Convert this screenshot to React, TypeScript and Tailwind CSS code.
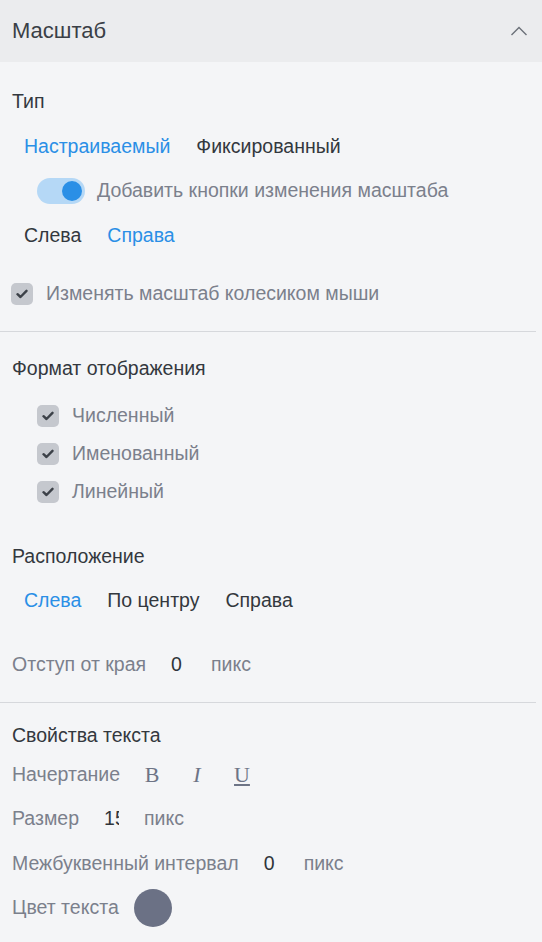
import { useState } from 'react'

const font = { fontFamily: '"Liberation Sans", Arial, sans-serif' }

const Check = () => (
  <span className="flex h-[22px] w-[22px] shrink-0 items-center justify-center rounded-[5px] bg-[#c5c8ce]">
    <svg width="12" height="10" viewBox="0 0 12 10" fill="none">
      <path
        d="M1.5 5.2 4.5 8 10.5 1.8"
        stroke="#3c4148"
        strokeWidth="2.4"
        strokeLinecap="round"
        strokeLinejoin="round"
      />
    </svg>
  </span>
)

type OptionsProps = {
  items: string[]
  active: number
  onSelect: (i: number) => void
}

const Options: React.FC<OptionsProps> = ({ items, active, onSelect }) => (
  <div className="flex items-center gap-[26px] pl-6">
    {items.map((item, i) => (
      <button
        key={item}
        onClick={() => onSelect(i)}
        className={i === active ? 'text-[#2a8fe6]' : 'text-[#33383e]'}
      >
        {item}
      </button>
    ))}
  </div>
)

// narrow input: a value longer than one digit gets clipped, as in the original
const NumberField = ({ value }: { value: string }) => (
  <div className="flex items-center">
    <span
      className={
        'ml-[25px] block w-[15px] whitespace-nowrap text-[#2f343a] ' +
        (value.length > 1 ? 'overflow-hidden' : 'overflow-visible')
      }
    >
      {value}
    </span>
    <span className="ml-[25px] text-[#7b808c]">пикс</span>
  </div>
)

export default function App() {
  const [type, setType] = useState(0)
  const [side, setSide] = useState(1)
  const [align, setAlign] = useState(0)

  return (
    <div
      style={font}
      className="min-h-screen w-full bg-[#f4f5f7] text-[19.5px] leading-none text-[#33383e]"
    >
      <div className="flex h-[62px] items-center justify-between bg-[#ebecee] pl-3 pr-[14px]">
        <span className="text-[22px] text-[#3a3f46]">Масштаб</span>
        <svg width="18" height="10" viewBox="0 0 18 10" fill="none">
          <path d="M1.5 9 9 1.5 16.5 9" stroke="#6b7079" strokeWidth="1.4" />
        </svg>
      </div>

      <div className="pt-[17px] pb-[15px]">
        <div className="flex h-[45px] items-center pl-3">Тип</div>
        <div className="flex h-[45px] items-center">
          <Options
            items={['Настраиваемый', 'Фиксированный']}
            active={type}
            onSelect={setType}
          />
        </div>
        <div className="flex h-[44px] items-center gap-3 pl-[37px]">
          <span className="flex h-[26px] w-[48px] items-center justify-end rounded-full bg-[#b5d8f6] pr-[3px]">
            <span className="h-[20px] w-[20px] rounded-full bg-[#2a8fe6]" />
          </span>
          <span className="text-[#7b808c]">Добавить кнопки изменения масштаба</span>
        </div>
        <div className="flex h-[45px] items-center">
          <Options items={['Слева', 'Справа']} active={side} onSelect={setSide} />
        </div>
        <div className="mt-[14px] flex h-[44px] items-center gap-[13px] pl-[11px]">
          <Check />
          <span className="text-[#7b808c]">Изменять масштаб колесиком мыши</span>
        </div>
      </div>

      <div className="mr-[6px] border-t border-[#d6d8dc]" />

      <div className="pt-[15px] pb-[15px]">
        <div className="flex h-[44px] items-center pl-3">Формат отображения</div>
        <div className="mt-[6px]">
          {['Численный', 'Именованный', 'Линейный'].map((label) => (
            <div key={label} className="flex h-[38px] items-center gap-[13px] pl-[37px]">
              <Check />
              <span className="text-[#7b808c]">{label}</span>
            </div>
          ))}
        </div>
        <div className="mt-6 flex h-[44px] items-center pl-3">Расположение</div>
        <div className="flex h-[44px] items-center">
          <Options
            items={['Слева', 'По центру', 'Справа']}
            active={align}
            onSelect={setAlign}
          />
        </div>
        <div className="mt-5 flex h-[44px] items-center pl-3">
          <span className="text-[#7b808c]">Отступ от края</span>
          <NumberField value="0" />
        </div>
      </div>

      <div className="mr-[6px] border-t border-[#d6d8dc]" />

      <div className="pt-[15px]">
        <div className="flex h-[36px] items-center pl-3">Свойства текста</div>
        <div className="flex h-[42px] items-center pl-3">
          <span className="text-[#7b808c]">Начертание</span>
          <div
            className="ml-[21px] flex items-center gap-[23px] text-[22px] text-[#6d7486]"
            style={{ fontFamily: '"Liberation Serif", "DejaVu Serif", serif' }}
          >
            <span className="w-[22px] text-center">B</span>
            <span className="w-[22px] text-center italic">I</span>
            <span className="w-[22px] text-center underline underline-offset-2">U</span>
          </div>
        </div>
        <div className="flex h-[46px] items-center pl-3">
          <span className="text-[#7b808c]">Размер</span>
          <NumberField value="15" />
        </div>
        <div className="flex h-[44px] items-center pl-3">
          <span className="text-[#7b808c]">Межбуквенный интервал</span>
          <NumberField value="0" />
        </div>
        <div className="flex h-[44px] items-center gap-[15px] pl-3">
          <span className="text-[#7b808c]">Цвет текста</span>
          <span className="h-[38px] w-[38px] rounded-full bg-[#6b7185]" />
        </div>
      </div>
    </div>
  )
}
